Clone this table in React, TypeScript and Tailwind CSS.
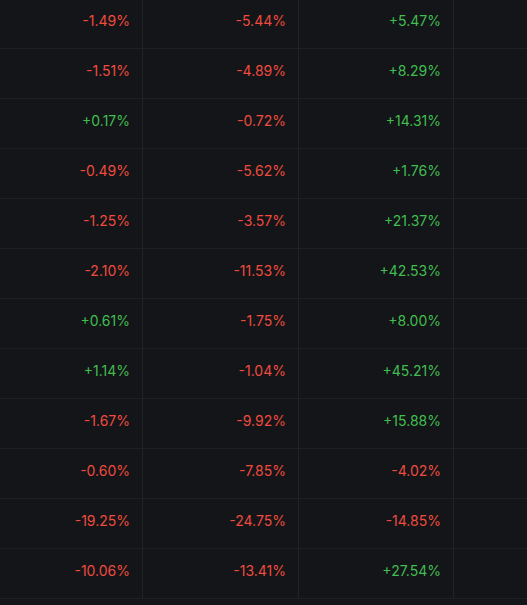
import React from 'react';

const rows: [string, string, string][] = [
  ['-1.49%', '-5.44%', '+5.47%'],
  ['-1.51%', '-4.89%', '+8.29%'],
  ['+0.17%', '-0.72%', '+14.31%'],
  ['-0.49%', '-5.62%', '+1.76%'],
  ['-1.25%', '-3.57%', '+21.37%'],
  ['-2.10%', '-11.53%', '+42.53%'],
  ['+0.61%', '-1.75%', '+8.00%'],
  ['+1.14%', '-1.04%', '+45.21%'],
  ['-1.67%', '-9.92%', '+15.88%'],
  ['-0.60%', '-7.85%', '-4.02%'],
  ['-19.25%', '-24.75%', '-14.85%'],
  ['-10.06%', '-13.41%', '+27.54%'],
];

function Cell({ value, width }: { value: string; width: string }) {
  const up = value.startsWith('+');
  return (
    <div
      className={`${width} h-full shrink-0 border-r border-[#212326] pr-[12px] pt-[13px] text-right leading-[17px] ${
        up ? 'text-[#42bd50]' : 'text-[#ef4b3f]'
      }`}
    >
      {value}
    </div>
  );
}

export default function App() {
  return (
    <div
      className="w-[527px] h-[605px] overflow-hidden bg-[#131518] text-[14px]"
      style={{ fontFamily: 'Inter, "Noto Sans", sans-serif' }}
    >
      <div className="-mt-px">
        {rows.map((r, i) => (
          <div key={i} className="flex h-[50px] border-b border-[#1e2023]">
            <Cell value={r[0]} width="w-[143px]" />
            <Cell value={r[1]} width="w-[156px]" />
            <Cell value={r[2]} width="w-[155px]" />
            <div className="flex-1" />
          </div>
        ))}
      </div>
    </div>
  );
}
